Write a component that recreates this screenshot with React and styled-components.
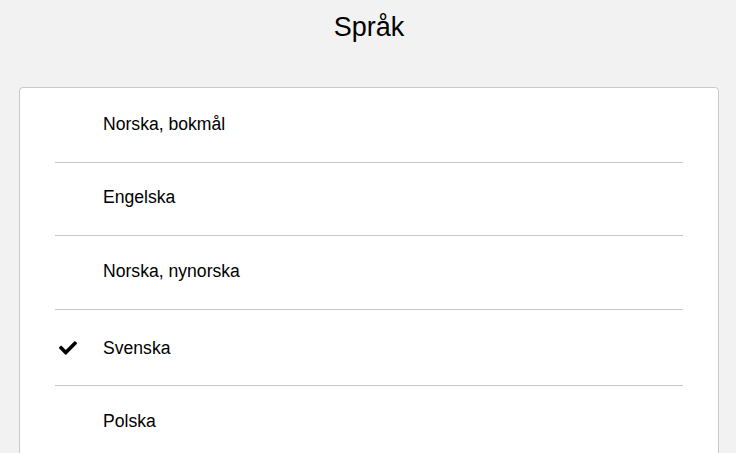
import React from "react";
import styled, { createGlobalStyle } from "styled-components";
import { FaCheck } from "react-icons/fa";

const Global = createGlobalStyle`
  html, body {
    margin: 0;
    padding: 0;
    background: #f2f2f2;
    font-family: "Liberation Sans", Arial, sans-serif;
    color: #000;
  }
`;

const Page = styled.div`
  display: flex;
  flex-direction: column;
  padding: 12px 17px 0 19px;
  min-height: 453px;
  box-sizing: border-box;
`;

const Title = styled.h1`
  margin: 0 0 44px;
  font-size: 27px;
  line-height: 31px;
  font-weight: 400;
  text-align: center;
`;

const Card = styled.div`
  background: #fff;
  border: 1px solid #c9c9c9;
  border-radius: 4px;
  padding: 1px 35px 40px;
  flex: 1;
`;

const List = styled.ul`
  list-style: none;
  margin: 0;
  padding: 0;
`;

const Row = styled.li`
  display: flex;
  align-items: center;
  padding: ${(p) => (p.$checked ? "27.5px 0 27.5px" : "24.6px 0 27.9px")};
  border-bottom: 1px solid #c6c6c6;
  font-size: 17.6px;
  line-height: 20.24px;
  cursor: pointer;
`;

const IconSlot = styled.span`
  width: 48px;
  flex: none;
  display: flex;
  align-items: center;
  padding-left: 4px;
  box-sizing: border-box;
  svg {
    width: 18px;
    height: 18px;
    display: block;
  }
`;

const Label = styled.span`
  flex: 1;
`;

const languages = [
  { name: "Norska, bokmål" },
  { name: "Engelska" },
  { name: "Norska, nynorska" },
  { name: "Svenska", checked: true },
  { name: "Polska" },
];

export default function App() {
  return (
    <>
      <Global />
      <Page>
        <Title>Språk</Title>
        <Card>
          <List>
            {languages.map((l) => (
              <Row key={l.name} $checked={l.checked}>
                <IconSlot>{l.checked && <FaCheck />}</IconSlot>
                <Label>{l.name}</Label>
              </Row>
            ))}
          </List>
        </Card>
      </Page>
    </>
  );
}
